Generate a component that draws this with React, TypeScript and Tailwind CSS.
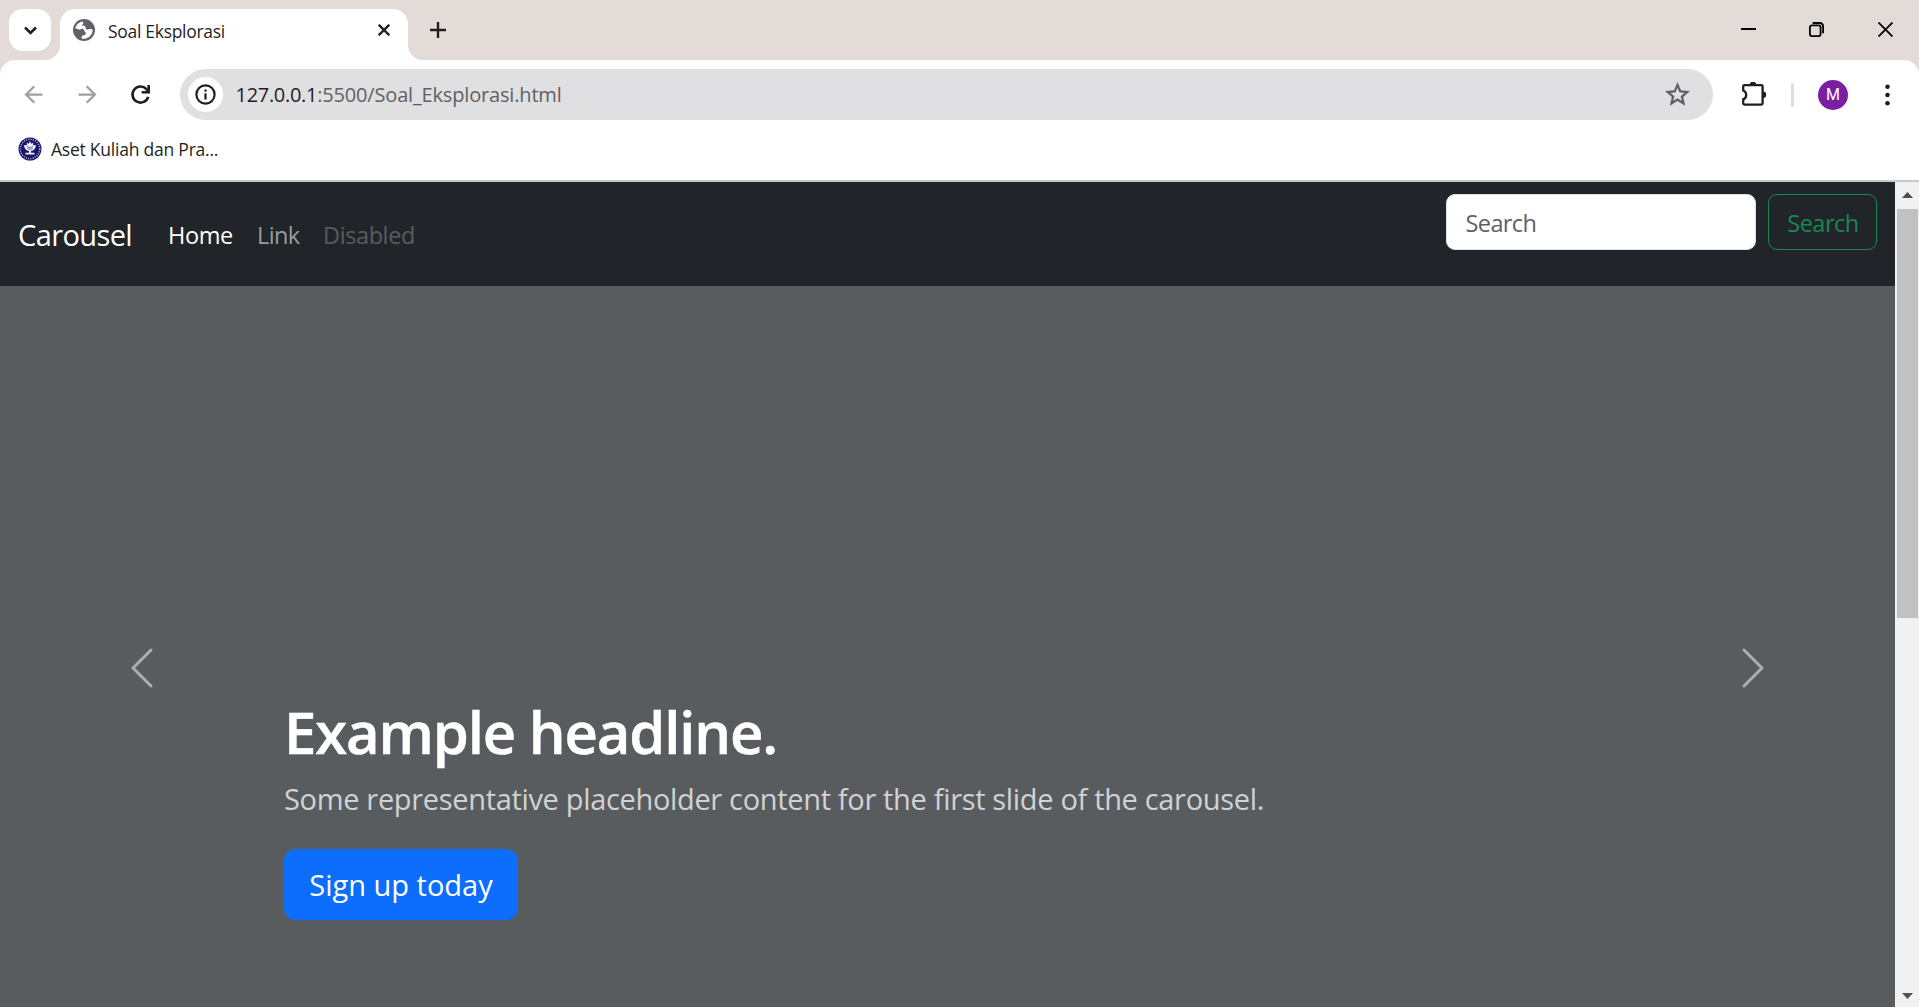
import type { ReactNode } from "react";
import { MdArrowBack, MdArrowForward } from "react-icons/md";

function GlobeIcon() {
  return (
    <svg className="size-[22px]" viewBox="0 0 22 22">
      <circle cx="11" cy="11" r="11" fill="#5f6368" />
      <path
        d="M2.3 9.600C2.900 5.900 5.600 3.200 9.200 2.400c.9.200 1.300 1 1 2-.3 1-1.400 1.300-1.600 2.200 1 .3 2.600-.2 3.500.7.8.9.300 2.200 1.100 2.900.9.7 2.500.1 3.600-.1 1.100-.2 2.300 0 2.900.7-.1 4.600-3.700 8.600-8.300 9-1.200.1-2-.1-2.700-.4-.3-1.200.1-2.400 1.100-2.900 1.200-.5 2.700-.4 3-1.800.2-1.300-1-1.700-1.500-2.600-.5-1-.3-2-1.400-2.300-1.400-.3-2.500.9-4 .7C4.600 10.300 3.600 9.300 2.300 9.600Z"
        fill="#fff"
      />
    </svg>
  );
}

function ReloadIcon() {
  return (
    <svg className="size-[21px]" viewBox="0 0 21 21" fill="none" stroke="#1f1f1f" strokeWidth="2.600">
      <path d="M18.200 12.800A8 8 0 1 1 16.400 5.100L18.600 7.300" />
      <path d="M18.700 1V8.200H11.600" />
    </svg>
  );
}

function InfoIcon() {
  return (
    <svg className="size-[21px]" viewBox="0 0 21 21">
      <circle cx="10.500" cy="10.500" r="9.100" fill="none" stroke="#1f1f1f" strokeWidth="2.200" />
      <rect x="9.400" y="5.500" width="2.200" height="2.200" fill="#1f1f1f" />
      <rect x="9.400" y="9.300" width="2.200" height="6.200" fill="#1f1f1f" />
    </svg>
  );
}

function StarIcon() {
  return (
    <svg className="ml-auto mr-[21.500px] size-[29px]" viewBox="0 0 24 24" fill="#5c5e60" stroke="#5c5e60" strokeWidth=".3">
      <path d="M22 9.240l-7.190-.62L12 2 9.190 8.630 2 9.240l5.460 4.730L5.820 21 12 17.270 18.180 21l-1.630-7.030L22 9.240zM12 15.400l-3.760 2.270 1-4.280-3.320-2.880 4.380-.38L12 6.100l1.710 4.040 4.380.38-3.320 2.880 1 4.280L12 15.400z" />
    </svg>
  );
}

function PuzzleIcon() {
  return (
    <svg className="size-[26px]" viewBox="0 0 26 26">
      <path
        d="M3.500 3.200H20.300Q21.600 3.200 21.600 4.500V21.300Q21.600 22.600 20.300 22.600H3.500Q2.200 22.600 2.200 21.300V17.300C6.200 16 6.200 9.800 2.200 8.500V4.500Q2.200 3.200 3.500 3.200Z"
        fill="none"
        stroke="#1f1f1f"
        strokeWidth="2.300"
      />
      <path d="M8.700 3A3.300 3.300 0 0 1 15.300 3Z" fill="#1f1f1f" />
      <path d="M22 9.600A3.200 3.200 0 0 1 22 16Z" fill="#1f1f1f" />
    </svg>
  );
}

function CampusSeal() {
  return (
    <svg className="size-6" viewBox="0 0 24 24">
      <circle cx="12" cy="12" r="11.500" fill="#1a1668" />
      <circle cx="12" cy="12" r="9.700" fill="none" stroke="#b9b7dc" strokeWidth="1.500" strokeDasharray="1 1.300" />
      <circle cx="12" cy="12" r="7.800" fill="#1a1668" />
      <path
        d="M12 4.200l1.300 2.600 2-1-.3 2.400 2.800-.2C17.900 11.700 15.500 13.600 13 14v1.700h3.500v1.800H7.500v-1.800H11V14c-2.500-.4-4.900-2.300-4.800-6l2.800.2-.3-2.400 2 1L12 4.200Z"
        fill="#f1f0fa"
      />
      <path d="M9 9.500q3 2.600 6 0M9.200 11.500q2.800 1.800 5.600 0" stroke="#1a1668" strokeWidth=".6" fill="none" />
    </svg>
  );
}

function TabStrip() {
  return (
    <div className="flex h-[60px] shrink-0 bg-[#e3dbd8]">
      <div className="ml-[9px] mt-[9px] flex size-[42px] items-center justify-center rounded-[14px] bg-white">
        <svg className="h-[9px] w-[13px]" viewBox="0 0 13 9" fill="none" stroke="#1f1f1f" strokeWidth="2.600">
          <path d="M1 1.500L6.500 7L12 1.500" />
        </svg>
      </div>
      <div className="ml-[-6px] flex w-[15px] items-end">
        <div className="size-[15px] bg-[radial-gradient(circle_at_0_0,transparent_14.500px,#fff_15.500px)]" />
      </div>
      <div className="mt-[9px] flex h-[51px] w-[348px] items-start rounded-t-[15px] bg-white pl-[13px]">
        <div className="mt-2.5">
          <GlobeIcon />
        </div>
        <span className="ml-[13px] mt-[11.500px] w-[270px] shrink-0 whitespace-nowrap text-[17.500px] leading-5 tracking-[-0.3px] text-[#1f1f1f]">
          Soal Eksplorasi
        </span>
        <svg className="mt-[15px] size-3 shrink-0" viewBox="0 0 12 12" stroke="#1f1f1f" strokeWidth="2.300">
          <path d="M.7.700L11.300 11.300M11.300.700L.7 11.300" />
        </svg>
      </div>
      <div className="flex w-[15px] items-end">
        <div className="size-[15px] bg-[radial-gradient(circle_at_100%_0,transparent_14.500px,#fff_15.500px)]" />
      </div>
      <svg className="ml-[7px] mt-[22px] size-4" viewBox="0 0 16 16" stroke="#1f1f1f" strokeWidth="2.400">
        <path d="M8 0V16M0 8H16" />
      </svg>
      <div className="ml-auto mt-[22px] flex gap-[53px] pr-[26px]">
        <svg className="size-[15px]" viewBox="0 0 15 15">
          <path d="M0 7H15" stroke="#000" strokeWidth="2" />
        </svg>
        <svg className="size-[15px]" viewBox="0 0 15 15" fill="none" stroke="#000" strokeWidth="1.800">
          <rect x=".9" y="3.400" width="10.700" height="10.700" rx="2" />
          <path d="M3.600 1H10.500Q14.100 1 14.100 4.600V11.300" />
        </svg>
        <svg className="ml-[1px] size-[15px]" viewBox="0 0 15 15" stroke="#000" strokeWidth="1.800">
          <path d="M.5.500L14.500 14.500M14.500.500L.5 14.500" />
        </svg>
      </div>
    </div>
  );
}

function Toolbar() {
  return (
    <div className="shrink-0 bg-[#e3dbd8]">
      <div className="flex h-[120px] flex-col rounded-t-[15px] bg-white">
        <div className="mt-[9px] flex h-[51px] shrink-0 items-center">
          <MdArrowBack className="ml-[19.500px] size-[27px] text-[#a0a0a0]" />
          <MdArrowForward className="ml-[27px] size-[27px] text-[#a0a0a0]" />
          <div className="ml-[29px]">
            <ReloadIcon />
          </div>
          <div className="ml-[29.500px] flex h-[51px] w-[1533px] items-center rounded-full bg-[#e0e0e2]">
            <div className="ml-2 flex size-[35px] items-center justify-center rounded-full bg-white">
              <InfoIcon />
            </div>
            <span className="ml-[12.500px] whitespace-nowrap text-xl leading-6 tracking-[-0.3px] text-[#1f1f1f]">
              127.0.0.1
              <span className="tracking-[-0.170px] text-[#5f6164]">:5500/Soal_Eksplorasi.html</span>
            </span>
            <StarIcon />
          </div>
          <div className="ml-[28px]">
            <PuzzleIcon />
          </div>
          <div className="ml-6 h-6 w-[3px] rounded-full bg-[#e3dbd8]" />
          <div className="ml-6 flex size-[30px] items-center justify-center rounded-full bg-[#7b1fa2] font-[Roboto] text-base text-white">
            M
          </div>
          <svg className="ml-[36.500px] h-[22px] w-[5px]" viewBox="0 0 5 22" fill="#1f1f1f">
            <circle cx="2.500" cy="2.700" r="2.300" />
            <circle cx="2.500" cy="11" r="2.300" />
            <circle cx="2.500" cy="19.300" r="2.300" />
          </svg>
        </div>
        <div className="ml-[18px] mt-[17px] flex items-center">
          <CampusSeal />
          <span className="ml-[9px] whitespace-nowrap text-[17.500px] leading-6 tracking-[-0.230px] text-[#1f1f1f]">
            Aset Kuliah dan Pra...
          </span>
        </div>
      </div>
    </div>
  );
}

function Navbar() {
  return (
    <nav className="flex h-[104px] shrink-0 items-center bg-[#212529] px-[18px] text-[23.500px]">
      <a className="w-[138px] text-[29px] leading-[45px] tracking-[-0.600px] text-white">Carousel</a>
      <a className="w-[89px] pl-3 pt-[3px] tracking-[-0.4px] text-white">Home</a>
      <a className="w-[66px] pl-3 pt-[3px] tracking-[-0.600px] text-[#9b9d9f]">Link</a>
      <a className="pl-3 pt-[3px] tracking-[-0.4px] text-[#595c5f]">Disabled</a>
      <form className="ml-auto flex gap-3 self-start pt-3">
        <input
          className="h-14 w-[310px] rounded-[9px] border border-[#dee2e6] bg-white pl-[18.500px] pt-[2px] tracking-[-0.600px] outline-none placeholder:text-[#5d6166] placeholder:opacity-100"
          placeholder="Search"
        />
        <button
          type="button"
          className="h-14 w-[109px] rounded-[9px] border border-[#198754] pl-[1px] pt-[3px] text-center tracking-[-0.5px] text-[#198754]"
        >
          Search
        </button>
      </form>
    </nav>
  );
}

function CarouselControl({ children }: { children: ReactNode }) {
  return (
    <button type="button" className="flex w-[284px] shrink-0 justify-center pt-[358px]">
      <svg className="size-12 opacity-50" viewBox="0 0 16 16" fill="none" stroke="#fff" strokeLinecap="round" strokeLinejoin="round">
        {children}
      </svg>
    </button>
  );
}

function Carousel() {
  return (
    <section className="flex min-h-0 flex-1 items-start bg-[#595c5f]">
      <CarouselControl>
        <path d="M11 2L5 8L11 14" />
      </CarouselControl>
      <div className="flex-1 whitespace-nowrap pt-[410px]">
        <h1 className="text-[58px] font-semibold leading-[72px] tracking-[-1.150px] text-white [-webkit-text-stroke:0.5px_white]">
          Example headline.
        </h1>
        <p className="mt-2 text-[29px] leading-[45px] tracking-[-0.330px] text-[#d0d2d4]">
          Some representative placeholder content for the first slide of the carousel.
        </p>
        <a className="mt-7 flex h-[71px] w-[234px] items-center justify-center rounded-xl bg-[#0d6efd] text-[29px] text-white">
          Sign up today
        </a>
      </div>
      <CarouselControl>
        <path d="M5 2L11 8L5 14" />
      </CarouselControl>
    </section>
  );
}

function Scrollbar() {
  return (
    <div className="flex w-6 shrink-0 flex-col items-center bg-[#f1f1f1] pl-[1px]">
      <svg className="mt-2.5 h-1.5 w-[11px] shrink-0" viewBox="0 0 11 6" fill="#505050">
        <path d="M0 6L5.500 0L11 6Z" />
      </svg>
      <div className="mt-[11px] h-[409px] w-[21px] bg-[#c1c1c1]" />
      <svg className="mb-2 mt-auto h-1.5 w-[11px] shrink-0" viewBox="0 0 11 6" fill="#505050">
        <path d="M0 0L5.500 6L11 0Z" />
      </svg>
    </div>
  );
}

export default function App() {
  return (
    <div className="flex h-[1007px] w-[1919px] flex-col overflow-hidden bg-white font-['Open_Sans','Noto_Sans',sans-serif]">
      <TabStrip />
      <Toolbar />
      <div className="h-0.5 shrink-0 bg-[#c7c9ca]" />
      <div className="flex min-h-0 flex-1">
        <main className="flex min-w-0 flex-1 flex-col">
          <Navbar />
          <Carousel />
        </main>
        <Scrollbar />
      </div>
    </div>
  );
}
